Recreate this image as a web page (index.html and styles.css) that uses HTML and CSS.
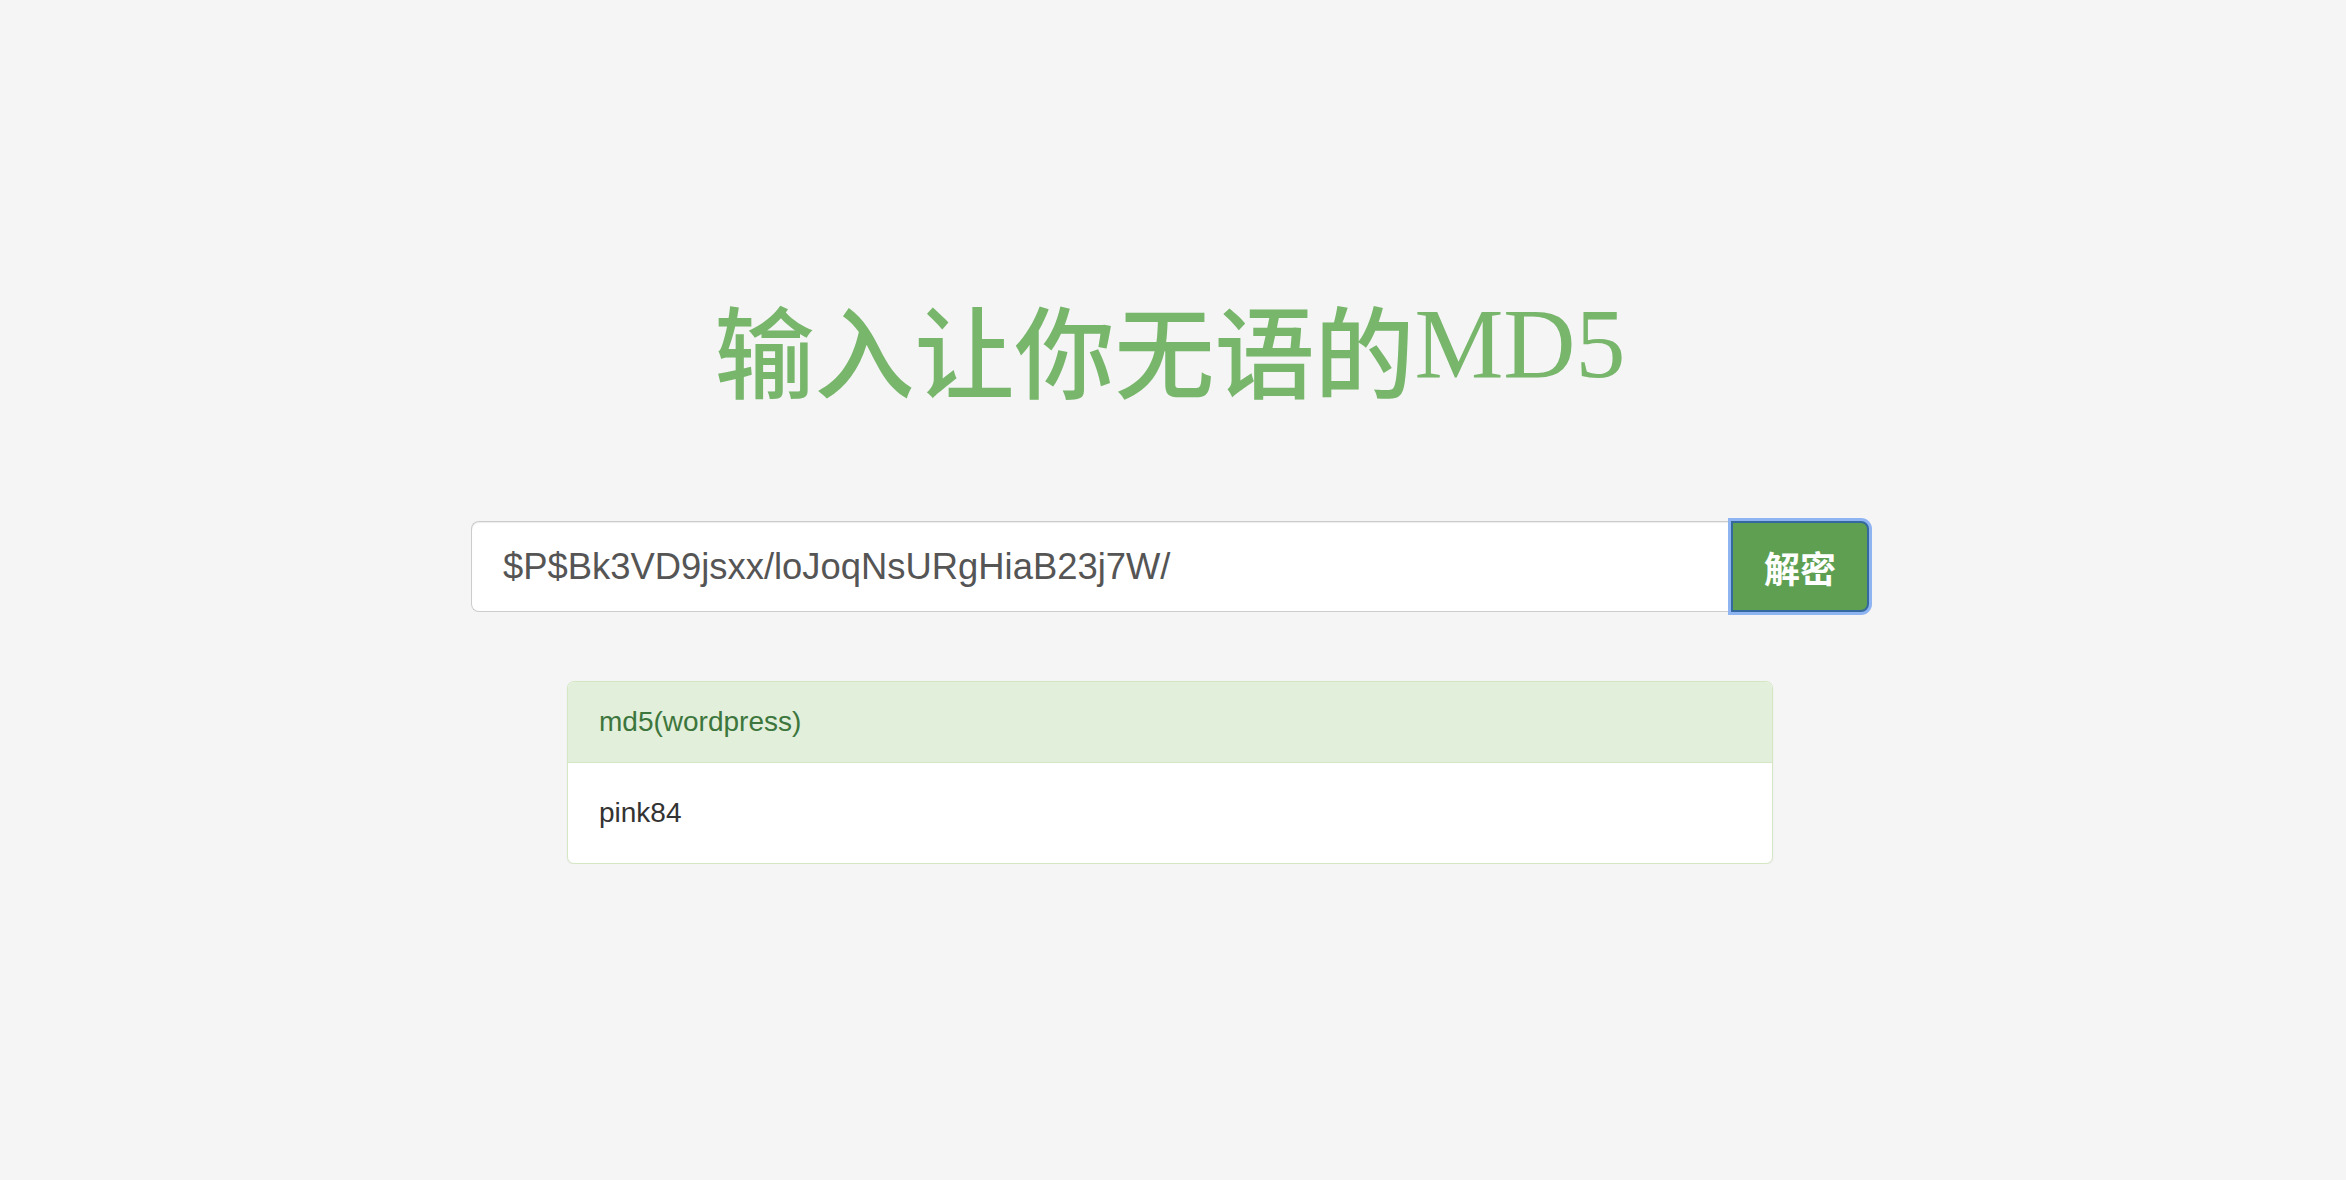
FILE: index.html
```html
<!DOCTYPE html>
<html lang="zh-CN">
<head>
<meta charset="utf-8">
<title>输入让你无语的MD5</title>
<link rel="stylesheet" href="styles.css">
</head>
<body>
<main class="page">
  <h1 class="title"><span class="title-cjk">输入让你无语的</span>MD5</h1>
  <form class="search">
    <input class="search-input" type="text" value="$P$Bk3VD9jsxx/loJoqNsURgHiaB23j7W/">
    <button class="search-btn" type="button">解密</button>
  </form>
  <section class="panel">
    <div class="panel-heading">md5(wordpress)</div>
    <div class="panel-body">pink84</div>
  </section>
</main>
</body>
</html>
```
FILE: styles.css
```css
html, body {
  margin: 0;
  padding: 0;
  background: #f5f5f5;
}
body {
  padding-right: 6px;
  font-family: "Liberation Sans", Arial, "Noto Sans CJK SC", sans-serif;
}
.page {
  padding-top: 294px;
  display: flex;
  flex-direction: column;
  align-items: center;
}
.title {
  margin: 0;
  font-family: "Liberation Serif", "Noto Sans CJK SC", serif;
  font-weight: normal;
  font-size: 100px;
  line-height: 100px;
  height: 100px;
  color: #77b66b;
  text-align: center;
  white-space: nowrap;
}
.title-cjk {
  font-family: "Noto Sans CJK SC", sans-serif;
  font-weight: 500;
  vertical-align: -14px;
  line-height: 0;
}
.search {
  margin: 127px 0 0 0;
  display: flex;
  width: 1398px;
  height: 91px;
}
.search-input {
  flex: 1;
  box-sizing: border-box;
  height: 91px;
  margin: 0;
  padding: 0 20px 0 31px;
  border: 1px solid #cccccc;
  border-right: none;
  border-radius: 8px 0 0 8px;
  background: #fff;
  color: #555555;
  font-family: "Liberation Sans", Arial, sans-serif;
  font-size: 36.4px;
  box-shadow: inset 0 1px 1px rgba(0,0,0,.075);
  outline: none;
}
.search-btn {
  box-sizing: border-box;
  width: 138px;
  height: 91px;
  margin: 0;
  padding: 0;
  border: 2px solid #34699f;
  border-radius: 0 8px 8px 0;
  background: #5e9f52;
  color: #fff;
  font-family: "Noto Sans CJK SC", sans-serif;
  font-weight: 700;
  font-size: 36px;
  line-height: 1;
  box-shadow: 0 0 0 3px #8fb4f2;
  cursor: pointer;
}
.panel {
  margin-top: 69px;
  width: 1206px;
  box-sizing: border-box;
  border: 1px solid #d3e7c2;
  border-radius: 7px;
  background: #fff;
  box-shadow: 0 1px 2px rgba(0,0,0,.05);
  overflow: hidden;
}
.panel-heading {
  height: 81px;
  box-sizing: border-box;
  padding: 0 31px;
  display: flex;
  align-items: center;
  background: #e2efda;
  border-bottom: 1px solid #d3e7c2;
  color: #3c763d;
  font-size: 28px;
}
.panel-body {
  height: 100px;
  box-sizing: border-box;
  padding: 0 31px;
  display: flex;
  align-items: center;
  color: #333333;
  font-size: 28px;
}
```
